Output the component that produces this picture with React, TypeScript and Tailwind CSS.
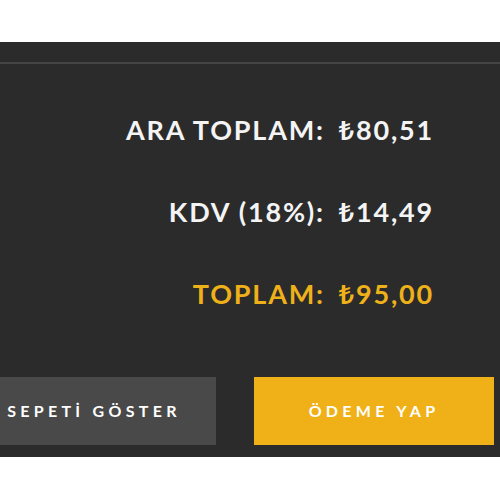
export default function App() {
  const font = { fontFamily: 'Lato, "DejaVu Sans", sans-serif' };
  const lira = { fontFamily: '"Noto Sans", "DejaVu Sans", sans-serif' };
  return (
    <div className="w-[500px] h-[500px] bg-white overflow-hidden" style={font}>
      <div className="h-[42px]" />
      <div className="h-[415px] bg-[#2b2b2b] flex flex-col">
        <div className="h-[20px]" />
        <div className="h-[2px] bg-[#454545]" />
        <div className="flex flex-col items-end pr-[66px] pt-[50px] gap-[50px] text-[27px] font-bold leading-[32px] tracking-[1.8px]">
          <div className="text-[#f4f4f4] flex gap-[14px]"><span>ARA TOPLAM:</span><span><span style={lira} className="font-semibold text-[27px]">₺</span>80,51</span></div>
          <div className="text-[#f4f4f4] flex gap-[14px]"><span>KDV (18%):</span><span><span style={lira} className="font-semibold text-[27px]">₺</span>14,49</span></div>
          <div className="text-[#efb11a] flex gap-[14px]"><span>TOPLAM:</span><span><span style={lira} className="font-semibold text-[27px]">₺</span>95,00</span></div>
        </div>
        <div className="flex mt-[67px] gap-[38px] ml-[-28px]">
          <div className="w-[244px] h-[68px] shrink-0 bg-[#494949] flex items-center justify-center text-white text-[16px] font-bold tracking-[4.3px]">SEPETİ GÖSTER</div>
          <div className="w-[240px] h-[68px] shrink-0 bg-[#efb117] flex items-center justify-center text-white text-[16px] font-bold tracking-[4.3px]">ÖDEME YAP</div>
        </div>
      </div>
    </div>
  );
}
